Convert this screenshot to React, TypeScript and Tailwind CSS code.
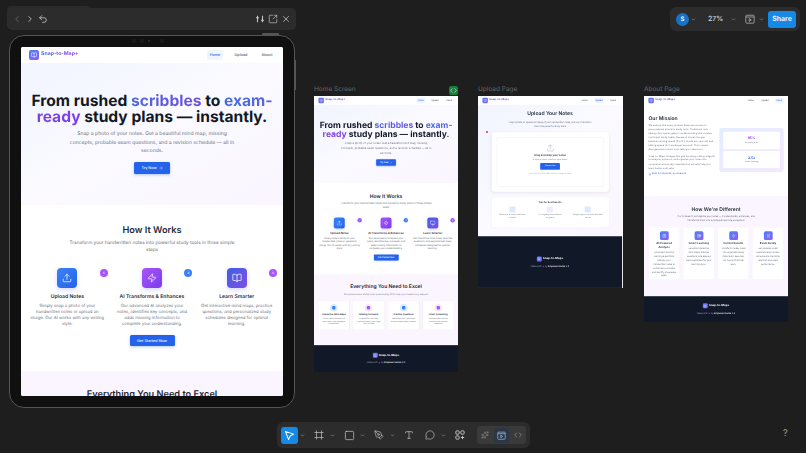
import React from "react";
import {
  ChevronLeft, ChevronRight, Undo2, SquareArrowOutUpRight, X, Upload, Sparkles, BookOpen, Monitor, ArrowRight,
  Square, PenTool, Type, MessageCircle, Code, ChevronDown, Frame, Zap, Target, Brain, Award, CircleCheck, Heart,
} from "lucide-react";

function Logo({ small }: { small?: boolean }) {
  return (
    <div className={`flex items-center justify-center rounded-[2px] bg-gradient-to-br from-[#3b82f6] to-[#8b5cf6] ${small ? "w-[9px] h-[9px]" : "w-[10px] h-[10px]"}`}>
      <BookOpen className="w-[6px] h-[6px] text-white" strokeWidth={2} />
    </div>
  );
}

function Nav({ active }: { active: string }) {
  return (
    <div className="h-[16px] bg-white flex items-center justify-between pl-[8px] pr-[8px] shrink-0">
      <div className="flex items-center gap-[2px]">
        <Logo />
        <span className="text-[5.2px] font-bold bg-gradient-to-r from-[#2563eb] to-[#9333ea] bg-clip-text text-transparent">Snap-to-Map+</span>
      </div>
      <div className="flex items-center gap-[10px] text-[3.8px] font-medium text-[#4b5563]">
        {["Home", "Upload", "About"].map((n) => (
          <span key={n} className={`py-[2px] rounded-[2px] w-[16px] text-center ${n === active ? "bg-[#eff6ff] text-[#2563eb]" : ""}`}>{n}</span>
        ))}
      </div>
    </div>
  );
}

function Footer({ className }: { className: string }) {
  return (
    <div className={`bg-[#111827] flex flex-col items-center justify-center gap-[6px] ${className}`}>
      <div className="flex items-center gap-[2px]">
        <Logo small />
        <span className="text-[5.2px] font-bold text-white">Snap-to-Map+</span>
      </div>
      <div className="flex items-center gap-[1px] text-[4px] text-[#9ca3af]">
        Made with <Heart className="w-[4px] h-[4px] text-[#9333ea] fill-[#9333ea]" /> by <span className="text-[#e5e7eb] font-semibold">Empower Hacks 3.0</span>
      </div>
    </div>
  );
}

const steps = [
  { t: "Upload Notes", d: "Simply snap a photo of your handwritten notes or upload an image. Our AI works with any writing style.", c: "from-[#3b82f6] to-[#2563eb]", b: "bg-[#a855f7]", n: 1 },
  { t: "AI Transforms & Enhances", d: "Our advanced AI analyzes your notes, identifies key concepts, and adds missing information to complete your understanding.", c: "from-[#a855f7] to-[#7c3aed]", b: "bg-[#3b82f6]", n: 2 },
  { t: "Learn Smarter", d: "Get interactive mind maps, practice questions, and personalized study schedules designed for optimal learning.", c: "from-[#3b5fe0] to-[#7c4dea]", b: "bg-[#a855f7]", n: 3 },
];

const feats = [
  { t: "Interactive Mind Maps", d: "Visual representations of your notes with intelligent connections", bg: "bg-[#dbeafe]", dot: "bg-[#3b82f6]" },
  { t: "Missing Concepts", d: "AI identifies and adds important topics you might have missed", bg: "bg-[#f3e8ff]", dot: "bg-[#a855f7]" },
  { t: "Practice Questions", d: "Generated exam questions based on your notes content", bg: "bg-[#dbeafe]", dot: "bg-[#3b82f6]" },
  { t: "Smart Scheduling", d: "Personalized revision timeline with spaced repetition", bg: "bg-[#f3e8ff]", dot: "bg-[#a855f7]" },
];

function HomePage({ third }: { third: "book" | "monitor" }) {
  return (
    <div className="w-[262px] flex flex-col">
      <Nav active="Home" />
      <section className="h-[142px] bg-gradient-to-br from-[#f1f5ff] via-[#fbfaff] to-[#faf5ff] flex flex-col items-center pt-[30px] px-[8px]">
        <h1 className="w-[246px] text-[15.6px] leading-[15.5px] font-bold text-[#111827] text-center">
          From rushed <span className="bg-gradient-to-r from-[#4f66e0] to-[#6d4fdc] bg-clip-text text-transparent">scribbles</span> to{" "}
          <span className="bg-gradient-to-r from-[#3f6be5] to-[#5a62e0] bg-clip-text text-transparent">exam-</span>
          <span className="bg-gradient-to-r from-[#7a45dc] to-[#7c3aed] bg-clip-text text-transparent">ready</span> study plans — instantly.
        </h1>
        <p className="mt-[6px] w-[168px] text-[5.1px] leading-[8.5px] text-[#6b7280] text-center">
          Snap a photo of your notes. Get a beautiful mind map, missing concepts, probable exam questions, and a revision schedule — all in seconds.
        </p>
        <div className="mt-[6px] w-[36px] h-[12px] rounded-[1.5px] bg-[#2563eb] flex items-center justify-center gap-[2px] text-[3.8px] font-medium text-white shadow-[0_1px_3px_rgba(37,99,235,0.35)]">
          Try Now <ArrowRight className="w-[4px] h-[4px]" />
        </div>
      </section>
      <section className="h-[166px] bg-white flex flex-col items-center pt-[20px] px-[8px]">
        <h2 className="text-[9.2px] leading-[12px] font-semibold text-[#1f2937]">How It Works</h2>
        <p className="mt-[3px] w-[175px] text-[4.7px] leading-[7.3px] text-[#6b7280] text-center">
          Transform your handwritten notes into powerful study tools in three simple steps
        </p>
        <div className="mt-[13px] grid grid-cols-3 gap-x-[8px] w-[246px]">
          {steps.map((s, i) => (
            <div key={s.t} className="relative flex flex-col items-center">
              <div className={`w-[20px] h-[20px] rounded-[4px] bg-gradient-to-br ${s.c} flex items-center justify-center shadow-[0_2px_4px_rgba(99,102,241,0.25)]`}>
                {i === 0 && <Upload className="w-[10px] h-[10px] text-white" strokeWidth={1.8} />}
                {i === 1 && <Zap className="w-[10px] h-[10px] text-white" strokeWidth={1.8} />}
                {i === 2 && (third === "book" ? <BookOpen className="w-[10px] h-[10px] text-white" strokeWidth={1.8} /> : <Monitor className="w-[10px] h-[10px] text-white" strokeWidth={1.8} />)}
              </div>
              <div className={`absolute right-[-2px] top-[1.5px] w-[8px] h-[8px] rounded-full ${s.b} flex items-center justify-center text-[3px] font-semibold text-white`}>{s.n}</div>
              <div className="mt-[6px] text-[5.1px] leading-[7px] font-semibold text-[#1f2937] whitespace-nowrap">{s.t}</div>
              <p className="mt-[3px] w-[74px] text-[4.25px] leading-[6.1px] text-[#6b7280] text-center">{s.d}</p>
            </div>
          ))}
        </div>
        <div className="mt-[7px] w-[45px] h-[11px] rounded-[1.5px] bg-[#2563eb] flex items-center justify-center text-[3.8px] font-medium text-white shadow-[0_1px_3px_rgba(37,99,235,0.35)]">
          Get Started Now
        </div>
      </section>
      <section className="h-[129px] bg-[#faf5ff] flex flex-col items-center pt-[18px] px-[8px]">
        <h2 className="text-[9.2px] leading-[12px] font-semibold text-[#1f2937]">Everything You Need to Excel</h2>
        <p className="mt-[5px] text-[4.4px] leading-[6px] text-[#6b7280]">Comprehensive study tools powered by AI to help you master any subject</p>
        <div className="mt-[8px] grid grid-cols-4 gap-x-[7px] w-[246px]">
          {feats.map((f) => (
            <div key={f.t} className="h-[52px] bg-white rounded-[2px] flex flex-col items-center pt-[5px] shadow-[0_0_2px_rgba(0,0,0,0.04)]">
              <div className={`w-[14px] h-[14px] rounded-full ${f.bg} flex items-center justify-center`}>
                <div className={`w-[6px] h-[6px] rounded-[1.5px] ${f.dot}`} />
              </div>
              <div className="mt-[3px] text-[4px] leading-[5px] font-semibold text-[#1f2937] whitespace-nowrap">{f.t}</div>
              <p className="mt-[2px] w-[47px] text-[3.4px] leading-[5.2px] text-[#6b7280] text-center">{f.d}</p>
            </div>
          ))}
        </div>
      </section>
      <Footer className="h-[49px]" />
    </div>
  );
}

function UploadPage() {
  const tips = [
    { d: "Ensure text is clearly visible and readable", c: "bg-[#dbeafe]" },
    { d: "Good lighting helps with text recognition", c: "bg-[#f3e8ff]" },
    { d: "Straight angles work better than tilted photos", c: "bg-[#dbeafe]" },
  ];
  return (
    <div className="w-[262px] flex flex-col">
      <Nav active="Upload" />
      <section className="h-[239px] bg-gradient-to-br from-[#f1f5ff] via-[#fbfaff] to-[#faf5ff] flex flex-col items-center pt-[11px]">
        <h2 className="text-[9.2px] leading-[12px] font-semibold text-[#1f2937]">Upload Your Notes</h2>
        <p className="mt-[5px] w-[160px] text-[4px] leading-[7px] text-[#6b7280] text-center">
          Snap a photo or upload an image of your handwritten notes, and we'll transform them into powerful study tools
        </p>
        <div className="mt-[8px] w-[213px] h-[108px] rounded-[4px] bg-white shadow-[0_2px_6px_rgba(0,0,0,0.08)] p-[9px]">
          <div className="h-full rounded-[3px] border border-[#f0f1f4] flex flex-col items-center pt-[11px]">
            <Upload className="w-[15px] h-[15px] text-[#9ca3af]" strokeWidth={1.2} />
            <div className="mt-[3px] text-[4.7px] leading-[7px] font-semibold text-[#1f2937]">Drag and drop your notes</div>
            <div className="mt-[1px] text-[3.4px] leading-[5px] text-[#6b7280]">or click to select a file from your device</div>
            <div className="mt-[4px] w-[36px] h-[12px] rounded-[1.5px] bg-[#2563eb] flex items-center justify-center text-[3.4px] font-medium text-white">Choose File</div>
            <div className="mt-[4px] text-[3.2px] leading-[5px] text-[#9ca3af]">Supports JPG, PNG, HEIC and more image formats</div>
          </div>
        </div>
        <div className="mt-[10px] w-[213px] h-[55px] rounded-[4px] bg-white shadow-[0_1px_3px_rgba(0,0,0,0.04)] flex flex-col items-center pt-[8px]">
          <div className="text-[4.2px] leading-[6px] font-semibold text-[#1f2937]">Tips for Best Results</div>
          <div className="mt-[3px] grid grid-cols-3 gap-x-[6px] w-[200px]">
            {tips.map((t) => (
              <div key={t.d} className="flex flex-col items-center">
                <div className={`w-[11px] h-[11px] rounded-[2px] ${t.c}`} />
                <p className="mt-[2px] w-[56px] text-[3.1px] leading-[4.6px] text-[#6b7280] text-center">{t.d}</p>
              </div>
            ))}
          </div>
        </div>
      </section>
      <Footer className="h-[94px]" />
    </div>
  );
}

function AboutPage() {
  const cards = [
    { t: "AI-Powered Analysis", d: "Advanced machine learning algorithms analyze your handwritten notes to extract key concepts and identify knowledge gaps.", I: Brain },
    { t: "Smart Learning", d: "Generate interactive mind maps, practice questions, and spaced plans optimized for your learning style.", I: Target },
    { t: "Instant Results", d: "Transform messy notes into organized study materials in seconds, not hours of manual work.", I: Zap },
    { t: "Exam Ready", d: "Get probable exam questions and revision schedules to maximize retention and exam performance.", I: Award },
  ];
  return (
    <div className="w-[262px] flex flex-col">
      <Nav active="About" />
      <section className="h-[166px] bg-white grid grid-cols-[121px_117px] gap-x-[8px] pl-[8px] pt-[19px]">
        <div>
          <h2 className="text-[9.2px] leading-[12px] font-semibold text-[#1f2937]">Our Mission</h2>
          <p className="mt-[3px] text-[4.5px] leading-[7.3px] text-[#6b7280]">
            We believe that every student deserves access to personalized, effective study tools. Traditional note-taking often leaves gaps in understanding and creates inefficient study habits. Research shows the gap between writing speed (0.2-0.3 words per second) and talking speed (2-3 words per second). This creates disorganized content note-taking in classroom.
          </p>
          <p className="mt-[5px] text-[4.5px] leading-[7.3px] text-[#6b7280]">
            Snap-to-Map+ bridges this gap by using cutting-edge AI to analyze, enhance, and organize your notes into comprehensive study materials that actually help you learn better and faster.
          </p>
          <div className="mt-[4px] flex items-center gap-[1.5px] text-[4.4px] leading-[6px] text-[#2563eb]">
            <CircleCheck className="w-[5px] h-[5px]" /> Built for students, by students
          </div>
        </div>
        <div className="mt-[23px] h-[80px] rounded-[4px] bg-gradient-to-br from-[#e4edff] to-[#f3e8ff] p-[7px] flex flex-col gap-[3px]">
          <div className="flex-1 bg-white rounded-[2px] flex flex-col items-center justify-center">
            <span className="text-[6px] leading-[8px] font-bold text-[#9333ea]">95%</span>
            <span className="text-[3.4px] leading-[5px] text-[#6b7280]">Accuracy Rate</span>
          </div>
          <div className="flex-1 bg-white rounded-[2px] flex flex-col items-center justify-center">
            <span className="text-[6px] leading-[8px] font-bold text-[#2563eb]">2.5x</span>
            <span className="text-[3.4px] leading-[5px] text-[#6b7280]">Faster Learning</span>
          </div>
        </div>
      </section>
      <section className="h-[182px] bg-[#faf5ff] flex flex-col items-center pt-[19px]">
        <h2 className="text-[9.2px] leading-[12px] font-semibold text-[#1f2937]">How We're Different</h2>
        <p className="mt-[3px] w-[160px] text-[4.2px] leading-[7.3px] text-[#6b7280] text-center">
          Our AI doesn't just digitize your notes — it understands, enhances, and transforms them into a complete learning ecosystem
        </p>
        <div className="mt-[8px] grid grid-cols-4 gap-x-[8px] w-[244px]">
          {cards.map(({ t, d, I }) => (
            <div key={t} className="h-[94px] bg-white rounded-[2px] flex flex-col items-center pt-[7px]">
              <div className="w-[16px] h-[16px] rounded-[3px] bg-gradient-to-br from-[#3b82f6] to-[#8b5cf6] flex items-center justify-center">
                <I className="w-[8px] h-[8px] text-white" strokeWidth={1.6} />
              </div>
              <div className="mt-[3px] w-[44px] text-[5px] leading-[7px] font-semibold text-[#1f2937] text-center">{t}</div>
              <p className="mt-[2px] w-[47px] text-[4px] leading-[7px] text-[#6b7280] text-center">{d}</p>
            </div>
          ))}
        </div>
      </section>
      <Footer className="h-[47px]" />
    </div>
  );
}

function Mini({ label, left, w = 144, h, code, children }: { label: string; left: string; w?: number; h: string; code?: boolean; children: React.ReactNode }) {
  return (
    <div className={`absolute top-[84px] ${left}`} style={{ width: w }}>
      <div className="h-[12px] flex items-center justify-between text-[6.5px] text-[#666]">
        <span>{label}</span>
        {code && (
          <div className="w-[9px] h-[9px] rounded-[2px] bg-[#14803c] flex items-center justify-center">
            <Code className="w-[7px] h-[7px] text-white" strokeWidth={2} />
          </div>
        )}
      </div>
      <div className={`overflow-hidden bg-white ${h}`}>
        <div className="origin-top-left scale-[0.55] bg-white">{children}</div>
      </div>
    </div>
  );
}

const caret = <ChevronDown className="w-[5px] h-[5px] text-[#9a9a9a]" strokeWidth={3} />;

function ScreenPlay({ className }: { className: string }) {
  return (
    <svg viewBox="0 0 12 12" className={className} fill="none" stroke="currentColor" strokeWidth="1">
      <rect x="1" y="1.5" width="10" height="9.5" rx="1" />
      <path d="M1 3.6h10M5 5.5v3.4l2.6-1.7z" />
    </svg>
  );
}

export default function App() {
  return (
    <div className="relative w-[806px] h-[453px] overflow-hidden bg-[#1e1e1e] font-['Inter',sans-serif] [text-rendering:geometricPrecision] [filter:blur(0.5px)]">
      {/* Preview window top bar */}
      <div className="absolute left-[7px] top-[6px] w-[83px] h-[6px] rounded-t-[4px] bg-[#2a2a2a]" />
      <div className="absolute left-[7px] top-[8px] w-[289px] h-[22px] rounded-[5px] bg-[#2c2c2c] flex items-center justify-between px-[5px] text-[#c4c4c4]">
        <div className="flex items-center gap-[3px]">
          <ChevronLeft className="w-[10px] h-[10px] text-[#666]" />
          <ChevronRight className="w-[10px] h-[10px]" />
          <Undo2 className="w-[10px] h-[10px]" />
        </div>
        <div className="flex items-center gap-[3px]">
          <svg viewBox="0 0 12 12" className="w-[10px] h-[10px]" fill="none" stroke="currentColor" strokeWidth="1.3">
            <path d="M3 2v8M9 2v8M1.2 4.5h3.6M7.2 7.5h3.6" />
          </svg>
          <SquareArrowOutUpRight className="w-[10px] h-[10px]" strokeWidth={1.6} />
          <X className="w-[10px] h-[10px]" strokeWidth={1.8} />
        </div>
      </div>

      {/* Device */}
      <div className="absolute left-[9px] top-[35px] w-[286px] h-[373px] rounded-[15px] border border-[#555] bg-[#101010] p-[11px]">
        <div className="absolute top-[3px] left-[122px] flex items-center gap-[4px]">
          <span className="w-[4px] h-[4px] rounded-full bg-[#1c1c1c]" />
          <span className="w-[4px] h-[4px] rounded-full bg-[#1c1c1c]" />
          <span className="w-[2px] h-[2px] rounded-full bg-[#2c2c3c]" />
          <span className="ml-[6px] w-[4px] h-[4px] rounded-full bg-[#1c1c1c]" />
        </div>
        <div className="h-[349px] rounded-[2px] overflow-hidden bg-white">
          <HomePage third="book" />
        </div>
      </div>
      <div className="absolute left-[262px] top-[33px] w-[17px] h-[2px] rounded-t-[1px] bg-[#555]" />
      <div className="absolute left-[295px] top-[60px] w-[1px] h-[30px] bg-[#555]" />

      {/* Canvas frames */}
      <Mini label="Home Screen" left="left-[314px]" h="h-[276px]" code>
        <HomePage third="monitor" />
      </Mini>
      <Mini label="Upload Page" left="left-[478px]" w={145} h="h-[192px]">
        <UploadPage />
      </Mini>
      <Mini label="About Page" left="left-[644px]" h="h-[226px]">
        <AboutPage />
      </Mini>
      <div className="absolute left-[486px] top-[131px] w-[2px] h-[2px] rounded-full bg-[#e0245e]" />

      {/* Share bar */}
      <div className="absolute left-[670px] top-[7px] w-[130px] h-[24px] rounded-[6px] bg-[#2c2c2c] flex items-center pl-[6px] pr-[4px]">
        <div className="w-[13px] h-[13px] rounded-full bg-[#1673c9] flex items-center justify-center text-[6px] font-semibold text-white">S</div>
        <span className="ml-[2px]">{caret}</span>
        <div className="ml-[5px] w-[35px] flex items-center justify-between text-[7px] font-medium text-[#d8d8d8]">
          <span className="ml-[7px]">27%</span>
          {caret}
        </div>
        <ScreenPlay className="ml-[9px] w-[10px] h-[10px] text-[#aaa]" />
        <span className="ml-[4px]">{caret}</span>
        <div className="ml-auto w-[28px] h-[17px] rounded-[3px] bg-[#1589e6] flex items-center justify-center text-[7px] font-semibold text-white">Share</div>
      </div>

      {/* Tools */}
      <div className="absolute left-[277px] top-[422px] w-[253px] h-[26px] rounded-[6px] bg-[#2c2c2c] flex items-center pl-[4px] pr-[4px] text-[#c8c8c8]">
        <div className="w-[17px] h-[17px] rounded-[3px] bg-[#1589e6] flex items-center justify-center">
          <svg viewBox="0 0 12 12" className="w-[11px] h-[11px]" fill="none" stroke="white" strokeWidth="1.1" strokeLinejoin="round">
            <path d="M1.5 1.5 L10.5 4.5 L6.7 6.5 L5 10.5 Z" />
          </svg>
        </div>
        <span className="ml-[2px]">{caret}</span>
        <Frame className="ml-[9px] w-[10px] h-[10px]" strokeWidth={1.6} />
        <span className="ml-[5.5px]">{caret}</span>
        <Square className="ml-[9px] w-[11px] h-[11px]" strokeWidth={1.5} />
        <span className="ml-[5px]">{caret}</span>
        <PenTool className="ml-[9.5px] w-[10px] h-[10px]" strokeWidth={1.5} />
        <span className="ml-[5.5px]">{caret}</span>
        <Type className="ml-[9.5px] w-[10px] h-[10px]" strokeWidth={1.6} />
        <MessageCircle className="ml-[11px] w-[10px] h-[10px]" strokeWidth={1.5} />
        <span className="ml-[5.5px]">{caret}</span>
        <svg viewBox="0 0 12 12" className="ml-[9.5px] w-[10px] h-[10px]" fill="none" stroke="currentColor" strokeWidth="1.1">
          <rect x="1" y="1" width="4" height="4" rx="1.2" />
          <rect x="7" y="1" width="4" height="4" rx="1.2" />
          <rect x="1" y="7" width="4" height="4" rx="1.2" />
          <path d="M9 7v4M7 9h4" />
        </svg>
        <div className="ml-auto w-[49px] h-[18px] rounded-[4px] bg-[#3a3a3a] flex items-center justify-between px-[2px]">
          <Sparkles className="w-[8px] h-[8px] ml-[2px] text-[#999]" strokeWidth={1.6} />
          <div className="w-[15px] h-[15px] rounded-[2px] bg-[#2c3644] flex items-center justify-center">
            <ScreenPlay className="w-[9px] h-[9px] text-[#8fb8dc]" />
          </div>
          <Code className="w-[8px] h-[8px] mr-[2px] text-[#aaa]" strokeWidth={1.8} />
        </div>
      </div>

      <div className="absolute left-[783px] top-[427px] text-[9px] text-[#a8a8a8]">?</div>
    </div>
  );
}
